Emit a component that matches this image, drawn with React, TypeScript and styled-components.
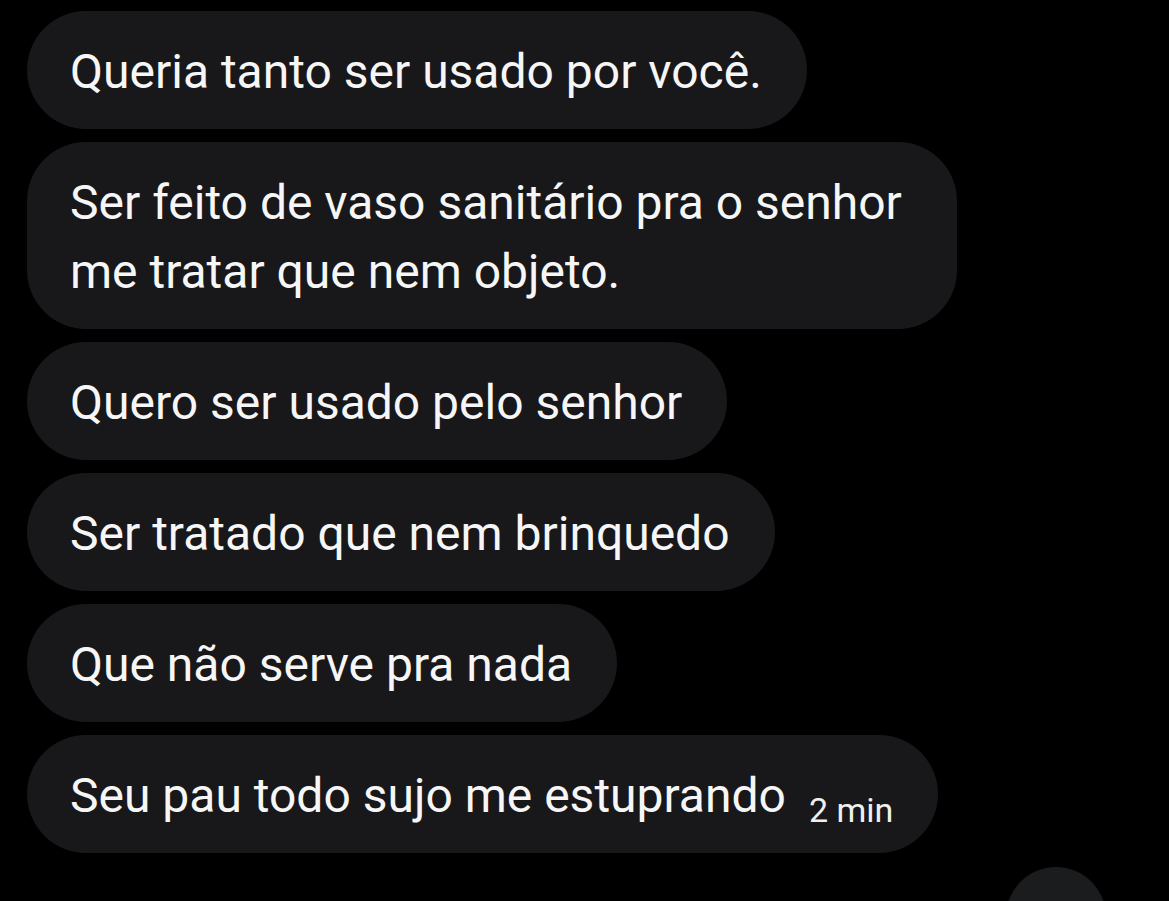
import React from 'react';
import styled, { createGlobalStyle } from 'styled-components';

const GlobalStyle = createGlobalStyle`
  html, body {
    margin: 0;
    padding: 0;
    background: #000;
  }
  body {
    font-family: Roboto, "Noto Sans", "Liberation Sans", sans-serif;
    color: #f4f4f5;
  }
`;

const messages: { text: string; time?: string }[] = [
  { text: 'Queria tanto ser usado por você.' },
  { text: 'Ser feito de vaso sanitário pra o senhor me tratar que nem objeto.' },
  { text: 'Quero ser usado pelo senhor' },
  { text: 'Ser tratado que nem brinquedo' },
  { text: 'Que não serve pra nada' },
  { text: 'Seu pau todo sujo me estuprando', time: '2 min' },
];

const App: React.FC = () => {
  return (
    <>
      <GlobalStyle />
      <Screen>
        <Thread>
          {messages.map((m, i) => (
            <Bubble key={i}>
              {m.text}
              {m.time && <Time>{m.time}</Time>}
            </Bubble>
          ))}
        </Thread>
        <FloatingButton />
      </Screen>
    </>
  );
};

const Screen = styled.div`
  position: relative;
  width: 1169px;
  height: 901px;
  overflow: hidden;
  background: #000;
`;

const Thread = styled.div`
  display: flex;
  flex-direction: column;
  align-items: flex-start;
  gap: 13px;
  padding: 11px 0 0 27px;
`;

const Bubble = styled.div`
  max-width: 930px;
  box-sizing: border-box;
  padding: 26px 45px 23px 43px;
  background: #18181a;
  border-radius: 59px;
  font-size: 48px;
  font-weight: 400;
  line-height: 69px;
  color: #f6f6f7;
`;

const Time = styled.span`
  display: inline-block;
  margin-left: 23px;
  font-size: 34px;
  vertical-align: -10px;
  line-height: 1;
  color: #f0f0f0;
`;

const FloatingButton = styled.div`
  position: absolute;
  left: 1006px;
  top: 867px;
  width: 100px;
  height: 100px;
  border-radius: 50%;
  background: #1b1c1e;
`;

export default App;
